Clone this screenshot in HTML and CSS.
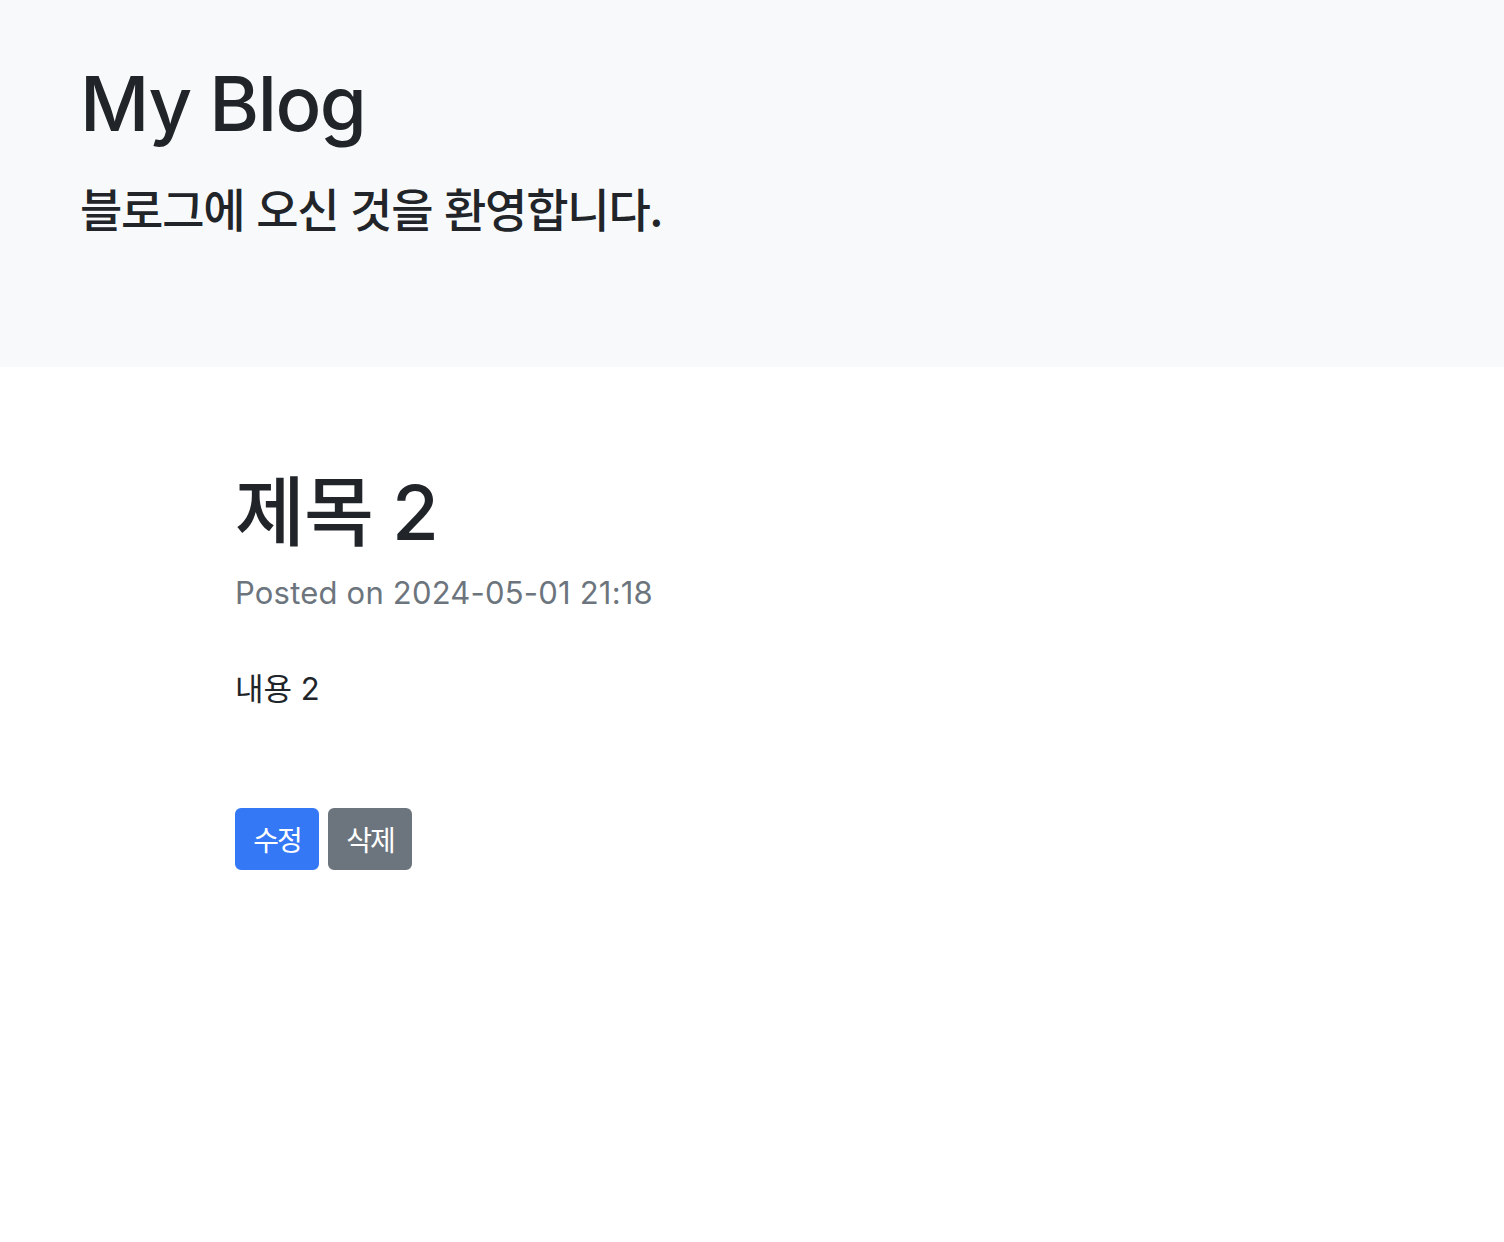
FILE: index.html
```html
<!DOCTYPE html>
<html lang="ko">
<head>
    <meta charset="UTF-8">
    <title>My Blog</title>
    <link rel="stylesheet" href="styles.css">
</head>
<body>
<header class="hero">
    <h1 class="hero-title">My Blog</h1>
    <p class="hero-lead">블로그에 오신 것을 환영합니다.</p>
</header>
<main class="container">
    <article class="post">
        <h1 class="post-title">제목 2</h1>
        <div class="post-meta">Posted on 2024-05-01 21:18</div>
        <p class="post-body">내용 2</p>
        <div class="post-actions">
            <button class="btn btn-primary" type="button">수정</button>
            <button class="btn btn-secondary" type="button">삭제</button>
        </div>
    </article>
</main>
</body>
</html>
```

FILE: styles.css
```css
* {
    margin: 0;
    padding: 0;
    box-sizing: border-box;
}
body {
    background-color: #fff;
    color: #212529;
    font-family: Inter, "Noto Sans CJK KR", sans-serif;
    font-size: 32px;
    line-height: 1.5;
}
.hero {
    background-color: #f8f9fa;
    height: 367px;
    padding: 58px 80px 0;
}
.hero-title {
    font-size: 76px;
    font-weight: 500;
    letter-spacing: -1.5px;
    line-height: 1.2;
}
.hero-lead {
    margin-top: 31px;
    font-family: "Noto Sans CJK KR", sans-serif;
    font-size: 46px;
    font-weight: 500;
    letter-spacing: -1.2px;
    line-height: 1.2;
}
.container {
    max-width: 1080px;
    margin: 0 auto;
    padding: 0 23px;
}
.post {
    padding-top: 100px;
}
.post-title {
    font-size: 76px;
    font-weight: 500;
    letter-spacing: -1px;
    line-height: 1.2;
}
.post-meta {
    margin-top: 12px;
    color: #6c757d;
    font-size: 31px;
    letter-spacing: 0.2px;
}
.post-body {
    margin-top: 49px;
    font-size: 31px;
}
.post-actions {
    display: flex;
    gap: 9px;
    margin-top: 96px;
}
.btn {
    border: 2px solid transparent;
    border-radius: 6px;
    padding: 8px 16px;
    color: #fff;
    font-family: "Noto Sans CJK KR", sans-serif;
    font-size: 28px;
    letter-spacing: -2px;
    line-height: 42px;
    width: 84px;
    text-align: center;
}
.btn-primary {
    background-color: #3478f6;
    border-color: #3478f6;
}
.btn-secondary {
    background-color: #6c757d;
    border-color: #6c757d;
}
```
